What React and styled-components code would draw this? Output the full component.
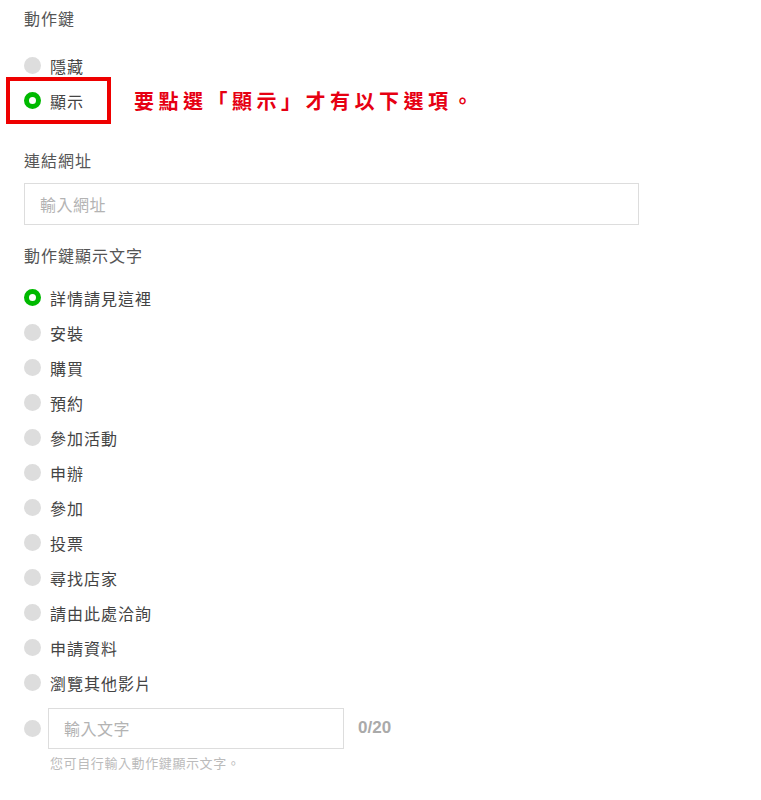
import styled, { createGlobalStyle } from 'styled-components';

const Global = createGlobalStyle`
  body {
    margin: 0;
    background: #fff;
    font-family: "Liberation Sans", "Noto Sans CJK TC", sans-serif;
  }
`;

const Page = styled.div`
  padding: 10px 0 20px 24px;
  width: 615px;
`;

const Label = styled.div`
  font-size: 16px;
  line-height: 20px;
  letter-spacing: 1px;
  color: #555;
  margin-top: ${(p) => p.top || 0}px;
`;

const RadioList = styled.div`
  display: flex;
  flex-direction: column;
  margin-top: ${(p) => p.top || 0}px;
`;

const Row = styled.label`
  position: relative;
  display: flex;
  align-items: center;
  height: ${(p) => p.h || 35}px;
  font-size: 16px;
  letter-spacing: 1px;
  color: #444;
`;

const Dot = styled.span`
  box-sizing: border-box;
  flex: none;
  width: 17px;
  height: 17px;
  border-radius: 50%;
  margin-right: ${(p) => p.gap || 9}px;
  background: ${(p) => (p.on ? '#fff' : '#ddd')};
  border: ${(p) => (p.on ? '5px solid #00b900' : 'none')};
`;

const Highlight = styled.span`
  position: absolute;
  left: -18px;
  top: -6px;
  width: 105px;
  height: 47px;
  box-sizing: border-box;
  border: 4px solid #ee0000;
  pointer-events: none;
`;

const Note = styled.span`
  margin-left: 50px;
  font-size: 20px;
  font-weight: bold;
  letter-spacing: 4.5px;
  color: #e60012;
`;

const Field = styled.div`
  box-sizing: border-box;
  width: ${(p) => p.w}px;
  height: ${(p) => p.h}px;
  border: 1px solid #ddd;
  display: flex;
  align-items: center;
  padding-left: 15px;
  font-size: 16px;
  letter-spacing: 0.5px;
  color: #b3b3b3;
  margin-top: ${(p) => p.top || 0}px;
`;

const Counter = styled.span`
  margin-left: 14px;
  font-size: 17px;
  font-weight: 600;
  letter-spacing: 0;
  color: #aaa;
`;

const Hint = styled.div`
  margin: -3px 0 0 26px;
  font-size: 13px;
  letter-spacing: 0.6px;
  color: #bbb;
`;

const options = [
  '詳情請見這裡',
  '安裝',
  '購買',
  '預約',
  '參加活動',
  '申辦',
  '參加',
  '投票',
  '尋找店家',
  '請由此處洽詢',
  '申請資料',
  '瀏覽其他影片',
];

export default function App() {
  return (
    <Page>
      <Global />
      <Label>動作鍵</Label>
      <RadioList top={18}>
        <Row>
          <Dot />
          隱藏
        </Row>
        <Row>
          <Highlight />
          <Dot on />
          顯示
          <Note>要點選「顯示」才有以下選項。</Note>
        </Row>
      </RadioList>
      <Label top={34}>連結網址</Label>
      <Field w={615} h={42} top={11}>輸入網址</Field>
      <Label top={22}>動作鍵顯示文字</Label>
      <RadioList top={13}>
        {options.map((o, i) => (
          <Row key={o}>
            <Dot on={i === 0} />
            {o}
          </Row>
        ))}
        <Row h={56}>
          <Dot gap={7} />
          <Field w={296} h={41}>輸入文字</Field>
          <Counter>0/20</Counter>
        </Row>
      </RadioList>
      <Hint>您可自行輸入動作鍵顯示文字。</Hint>
    </Page>
  );
}
